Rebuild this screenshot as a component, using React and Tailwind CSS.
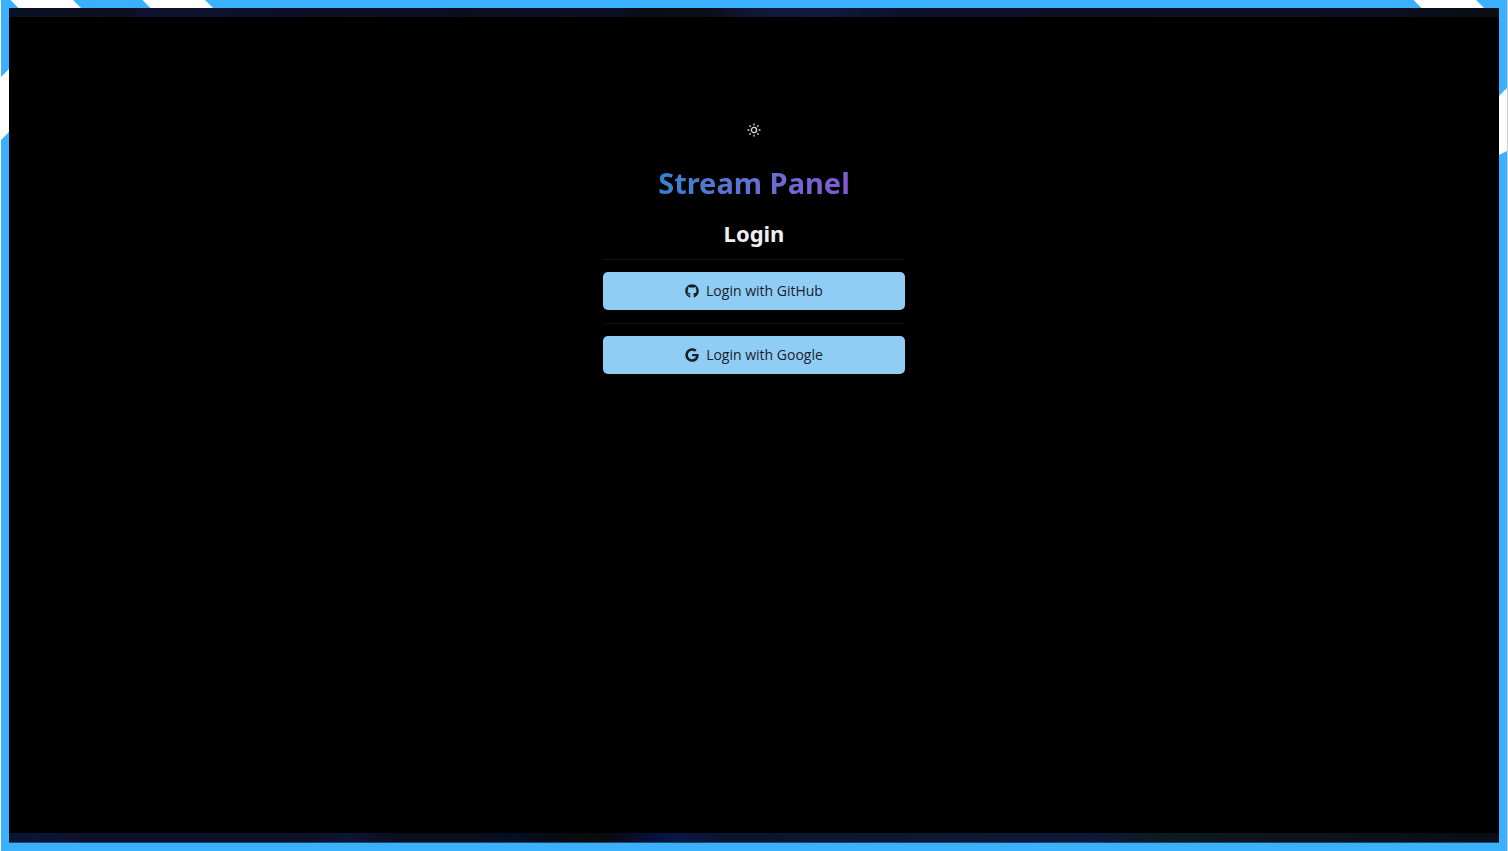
import { FaGithub, FaGoogle } from "react-icons/fa";

function SunIcon() {
  return (
    <svg viewBox="0 0 14 14" className="size-3.5" fill="none" stroke="#dcdcdc" strokeLinecap="round" aria-hidden="true">
      <circle cx="7" cy="7" r="2.6" strokeWidth="1.3" />
      <path
        strokeWidth="1.3"
        d="M7 1v.9M7 12.100v.9M1 7h.9M12.100 7h.9M2.800 2.800l.6.6M10.600 10.600l.6.6M2.800 11.200l.6-.6M10.600 3.400l.6-.6"
      />
    </svg>
  );
}

function LoginButton({ icon: Icon, children }) {
  return (
    <button
      type="button"
      className="flex h-[38px] w-full items-center justify-center gap-[7px] rounded-[5px] bg-[#90cdf4] font-['Open_Sans','Noto_Sans',sans-serif] text-sm font-medium text-[#1a202c]"
    >
      <Icon className="size-3.5" aria-hidden="true" />
      {children}
    </button>
  );
}

export default function App() {
  return (
    <div className="flex min-h-screen flex-col border-l border-r border-l-white border-r-[#cccccc] bg-white font-['Noto_Sans','Open_Sans',sans-serif]">
      <div className="relative flex grow flex-col bg-[#3ab0ff] p-2">
        <svg className="absolute top-0 left-0 h-40 w-60" viewBox="1 0 240 160" fill="#fff" aria-hidden="true">
          <path d="M10.500 0H73L81 8H18.500ZM142.500 0H205L213 8H150.500ZM1 77L9 69V132L1 140Z" />
        </svg>
        <svg className="absolute top-0 right-0 h-40 w-30" viewBox="1387 0 120 160" fill="#fff" aria-hidden="true">
          <path d="M1413.500 0H1476L1484 8H1421.500ZM1507 88L1499 96V155L1507 151Z" />
        </svg>
        <div className="relative flex grow flex-col bg-black">
          <div className="h-[9px] bg-[linear-gradient(90deg,#0b1026_0%,#0c0f1e_8%,#0d1230_9%,#0b1026_22%,#0b0e21_30%,#0a1024_41%,#090c17_42%,#0c0e1a_47%,#101737_50%,#111a3b_55%,#0c112a_60%,#0b0f22_92%,#090d14_98%,#090d14_100%)]" />
          <main className="mx-auto flex w-[302px] grow flex-col items-center pt-[106px]">
            <button type="button" aria-label="Switch to light mode" className="flex size-3.5 items-center justify-center">
              <SunIcon />
            </button>
            <h1 className="mt-[26px] bg-linear-to-r from-[#3182ce] to-[#805ad5] bg-clip-text text-[29px] leading-10 font-bold whitespace-nowrap text-transparent">
              Stream Panel
            </h1>
            <h2 className="mt-[14px] text-[22px] leading-8 font-bold text-[#eeeeee]">Login</h2>
            <hr className="mt-[10px] mb-3 w-full border-[#151515]" />
            <LoginButton icon={FaGithub}>Login with GitHub</LoginButton>
            <hr className="mt-[13px] mb-3 w-full border-[#0e0e0e]" />
            <LoginButton icon={FaGoogle}>Login with Google</LoginButton>
          </main>
          <div className="h-[10px] border-b border-[#204766] bg-[linear-gradient(90deg,#0a1230_0%,#0a1538_2%,#0b122c_5%,#0b122a_20%,#0c1535_23%,#090d20_26%,#0a0d1f_31%,#020f25_34%,#070b12_37%,#090a0d_40%,#06113a_43%,#071747_45%,#0c152f_48%,#0d1938_73%,#0c1a24_77%,#0c151d_85%,#080d16_100%)]" />
        </div>
      </div>
    </div>
  );
}
